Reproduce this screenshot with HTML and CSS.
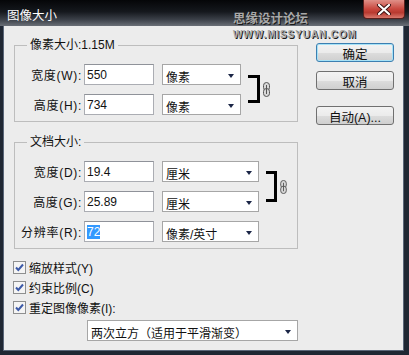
FILE: index.html
```html
<!DOCTYPE html>
<html>
<head>
  <meta charset="utf-8">
  <title>图像大小</title>
  <link rel="stylesheet" href="styles.css">
</head>
<body>

<div class="window">
  <div class="titlebar">
    <span class="title">图像大小</span>
    <div class="close">
      <svg width="16" height="11" viewBox="0 0 16 11"><path d="M3 1 L13 10 M13 1 L3 10" stroke="#3a1010" stroke-width="4" stroke-linecap="round"/><path d="M3 1 L13 10 M13 1 L3 10" stroke="#fff" stroke-width="2.2" stroke-linecap="round"/></svg>
    </div>
    <span class="watermark">思缘设计论坛 <span class="site">WWW.MISSYUAN.COM</span></span>
  </div>

  <div class="dialog">
    <div class="main">

      <fieldset class="group">
        <legend>像素大小:1.15M</legend>
        <div class="rows pixel">
          <label>宽度(W):</label>
          <div class="field">550</div>
          <div class="select"><span>像素</span><i class="arrow"></i></div>
          <div class="link">
            <div class="bracket"></div>
            <svg class="clip" width="7" height="15" viewBox="0 0 7 15"><rect x="0.5" y="0.5" width="6" height="8" rx="3" fill="#d8d8d8" stroke="#555"/><rect x="0.5" y="6.5" width="6" height="8" rx="3" fill="#d8d8d8" stroke="#555"/><path d="M3.5 3 V12" stroke="#555"/></svg>
          </div>
          <label>高度(H):</label>
          <div class="field">734</div>
          <div class="select"><span>像素</span><i class="arrow"></i></div>
        </div>
      </fieldset>

      <fieldset class="group doc">
        <legend>文档大小:</legend>
        <div class="rows document">
          <label>宽度(D):</label>
          <div class="field">19.4</div>
          <div class="select"><span>厘米</span><i class="arrow"></i></div>
          <div class="link">
            <div class="bracket"></div>
            <svg class="clip" width="7" height="14" viewBox="0 0 7 15"><rect x="0.5" y="0.5" width="6" height="8" rx="3" fill="#d8d8d8" stroke="#555"/><rect x="0.5" y="6.5" width="6" height="8" rx="3" fill="#d8d8d8" stroke="#555"/><path d="M3.5 3 V12" stroke="#555"/></svg>
          </div>
          <label>高度(G):</label>
          <div class="field">25.89</div>
          <div class="select"><span>厘米</span><i class="arrow"></i></div>
          <label>分辨率(R):</label>
          <div class="field"><span class="selected">72</span></div>
          <div class="select"><span>像素/英寸</span><i class="arrow"></i></div>
        </div>
      </fieldset>

      <div class="checks">
        <div class="check">
          <svg width="13" height="13" viewBox="0 0 13 13"><rect x="0.5" y="0.5" width="12" height="12" fill="#f4f4f4" stroke="#8e8f8f"/><path d="M3 6.5 L5.3 9 L10 3.5" fill="none" stroke="#3d5aa8" stroke-width="2"/></svg>
          <span>缩放样式(Y)</span>
        </div>
        <div class="check">
          <svg width="13" height="13" viewBox="0 0 13 13"><rect x="0.5" y="0.5" width="12" height="12" fill="#f4f4f4" stroke="#8e8f8f"/><path d="M3 6.5 L5.3 9 L10 3.5" fill="none" stroke="#3d5aa8" stroke-width="2"/></svg>
          <span>约束比例(C)</span>
        </div>
        <div class="check">
          <svg width="13" height="13" viewBox="0 0 13 13"><rect x="0.5" y="0.5" width="12" height="12" fill="#f4f4f4" stroke="#8e8f8f"/><path d="M3 6.5 L5.3 9 L10 3.5" fill="none" stroke="#3d5aa8" stroke-width="2"/></svg>
          <span>重定图像像素(I):</span>
        </div>
      </div>

      <div class="select resample"><span>两次立方（适用于平滑渐变）</span><i class="arrow"></i></div>
    </div>

    <div class="actions">
      <button class="btn default">确定</button>
      <button class="btn">取消</button>
      <button class="btn auto">自动(A)...</button>
    </div>
  </div>
</div>

</body>
</html>
```

FILE: styles.css
```css
body {
    margin: 0;
    font-family: "Liberation Sans", "Noto Sans CJK SC", sans-serif;
    font-size: 12px;
    color: #111;
}

.window {
    width: 409px;
    height: 355px;
    box-sizing: border-box;
    background: #1f2733;
    padding: 0 5px 4px 3px;
    display: flex;
    flex-direction: column;
}

.titlebar {
    position: relative;
    height: 26px;
    flex: none;
    display: flex;
    align-items: flex-start;
    margin: 0 -5px 0 -3px;
    background: linear-gradient(#050608, #15181d 45%, #3b4048 75%, #6a6f77);
}

.title {
    color: #fff;
    margin: 5px 0 0 7px;
    font-size: 12.5px;
}

.close {
    margin-left: auto;
    margin-right: 4px;
    width: 42px;
    height: 19px;
    box-sizing: border-box;
    border: 1px solid #5a1f1c;
    border-top: 0;
    border-radius: 0 0 4px 4px;
    background: linear-gradient(#e09088, #c9473e 50%, #b83a30 70%, #d8776c);
    display: flex;
    align-items: center;
    justify-content: center;
}

.watermark {
    position: absolute;
    left: 233px;
    top: 8px;
    color: #a9a9a9;
    font-size: 12.5px;
    font-weight: bold;
    text-shadow: 1px 1px 0 #1a1a1a;
}

.watermark .site {
    font-size: 10px;
    letter-spacing: 0.9px;
}

.dialog {
    flex: 1;
    display: flex;
    background: #ececec;
    padding: 12px 0 0 11px;
    box-shadow: inset 1px 0 0 #5a6678, inset -1px -1px 0 #5a6678;
}

.main {
    width: 284px;
}

.group {
    margin: 0;
    padding: 12px 0 6px 0;
    border: 1px solid #bdbdbd;
}

.group legend {
    margin-left: 12px;
    padding: 0 3px;
    line-height: 14px;
}

.group.doc {
    margin-top: 13px;
}

.rows {
    display: grid;
    grid-template-columns: 67px 72px 87px auto;
    grid-auto-rows: 21px;
    row-gap: 9px;
    align-items: center;
}

.rows.document {
    grid-template-columns: 67px 72px 105px auto;
}

.rows label {
    text-align: right;
    letter-spacing: 0.7px;
}

.field {
    margin-left: 2px;
    height: 21px;
    box-sizing: border-box;
    border: 1px solid #abadb3;
    border-top-color: #8f9299;
    background: #fff;
    padding: 2px 0 0 2px;
    line-height: 16px;
}

.selected {
    background: #3399ff;
    color: #fff;
}

.select {
    margin-left: 8px;
    height: 21px;
    box-sizing: border-box;
    border: 1px solid #a6a6a6;
    background: #fff;
    display: flex;
    align-items: center;
    padding: 3px 6px 0 3px;
}

.select span {
    flex: 1;
}

.arrow {
    width: 0;
    height: 0;
    border-left: 3.5px solid transparent;
    border-right: 3.5px solid transparent;
    border-top: 4px solid #1b2646;
}

.link {
    grid-column: 4;
    grid-row: 1 / 3;
    align-self: stretch;
    display: flex;
    align-items: center;
    margin-left: 7px;
}

.bracket {
    align-self: stretch;
    width: 9px;
    border: 3px solid #000;
    border-left: 0;
    margin: 11px 0 12px;
}

.document .bracket {
    width: 8px;
    margin: 10px 0 10px;
}

.clip {
    margin-left: 3px;
}

.checks {
    margin-top: 8px;
}

.check {
    display: flex;
    align-items: center;
    height: 20px;
    margin-left: -1px;
}

.check svg {
    margin-right: 3px;
}

.select.resample {
    margin: 3px 0 0 73px;
    width: 211px;
}

.actions {
    display: flex;
    flex-direction: column;
    margin: 5px 0 0 18px;
}

.btn {
    width: 78px;
    height: 19px;
    padding: 0;
    font-family: inherit;
    font-size: 12.5px;
    color: #111;
    border: 1px solid #707070;
    border-radius: 3px;
    background: linear-gradient(#f3f3f3, #ebebeb 50%, #dddddd 51%, #cfcfcf);
    margin-bottom: 9px;
}

.btn.default {
    border-color: #3c7fb1;
    box-shadow: inset 0 0 0 1px #a6e2f7;
}

.btn.auto {
    margin-top: 7px;
}
```
